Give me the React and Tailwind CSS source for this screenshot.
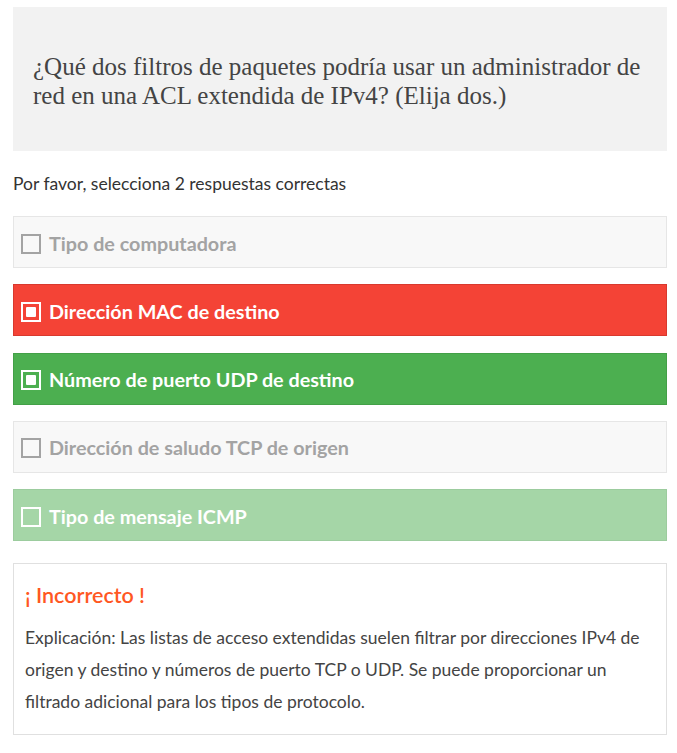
export default function App() {
  const options = [
    { label: 'Tipo de computadora', kind: 'idle' },
    { label: 'Dirección MAC de destino', kind: 'wrong' },
    { label: 'Número de puerto UDP de destino', kind: 'right' },
    { label: 'Dirección de saludo TCP de origen', kind: 'idle' },
    { label: 'Tipo de mensaje ICMP', kind: 'missed' },
  ]

  const styles = {
    idle: 'bg-[#f8f8f8] border-[#e6e6e6] text-[#a3a3a3]',
    wrong: 'bg-[#f44336] border-[#d8392e] text-white',
    right: 'bg-[#4caf50] border-[#43a047] text-white',
    missed: 'bg-[#a5d6a7] border-[#9ccc9e] text-white',
  }

  return (
    <div className="w-[677px] min-h-[753px] bg-white pt-[7px] pl-[13px] pr-[10px] font-['Lato',sans-serif]">
      <div className="bg-[#f2f2f2] h-[144px] flex items-center pl-[20px] pr-[14px] pt-[4px]">
        <h1 className="font-['Liberation_Serif',serif] text-[25px] leading-[29px] text-[#444]">
          ¿Qué dos filtros de paquetes podría usar un administrador de red en una ACL extendida de IPv4? (Elija dos.)
        </h1>
      </div>

      <p className="mt-[22px] text-[17.5px] leading-[22px] text-[#333]">Por favor, selecciona 2 respuestas correctas</p>

      <div className="mt-[21px] flex flex-col gap-[16.25px]">
        {options.map(o => (
          <div
            key={o.label}
            className={`h-[52px] border flex items-center pl-[7px] pt-[3px] ${styles[o.kind]}`}
          >
            <span
              className={`w-[20px] h-[20px] border-2 flex items-center justify-center mr-[8px] ${o.kind === 'idle' ? 'border-[#a3a3a3]' : 'border-white'}`}
            >
              {(o.kind === 'wrong' || o.kind === 'right') && (
                <span className="w-[10px] h-[10px] bg-white rounded-[1px]" />
              )}
            </span>
            <span className="text-[19.75px] font-bold leading-none">{o.label}</span>
          </div>
        ))}
      </div>

      <div className="mt-[22px] border border-[#e0e0e0] pl-[11px] pr-[12px] pt-[18px] pb-[16px]">
        <div className="text-[#ff5722] text-[21.5px] font-semibold leading-[26px]">¡ Incorrecto !</div>
        <p className="mt-[14px] text-[17.5px] leading-[32px] text-[#444]">
          Explicación: Las listas de acceso extendidas suelen filtrar por direcciones IPv4 de origen y destino y números de puerto TCP o UDP. Se puede proporcionar un filtrado adicional para los tipos de protocolo.
        </p>
      </div>
    </div>
  )
}
